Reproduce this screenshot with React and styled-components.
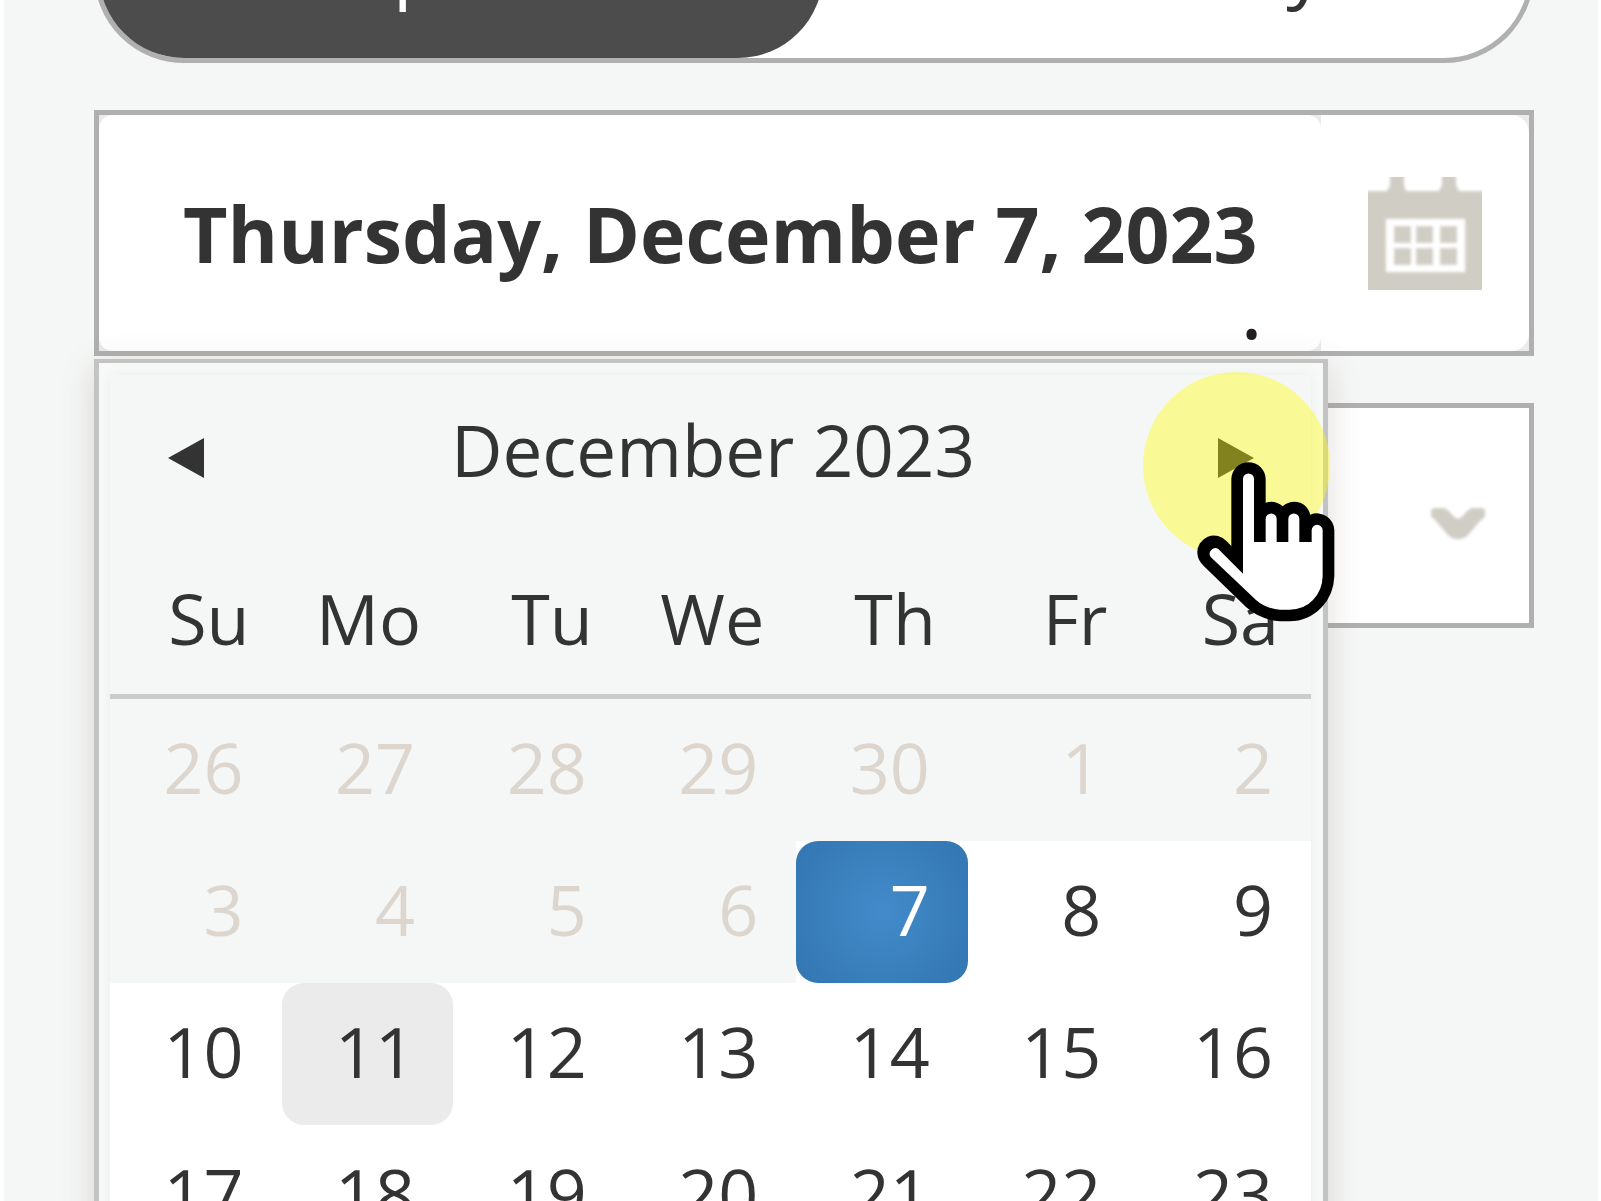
import React from "react";
import styled, { createGlobalStyle, css } from "styled-components";

const Global = createGlobalStyle`
  *, *::before, *::after { box-sizing: border-box; }
  body { margin: 0; background: #f5f7f6; overflow: hidden; }
  button, input, select { font: inherit; color: inherit; margin: 0; padding: 0; border: 0; background: none; }
`;

const Page = styled.main`
  height: 100vh;
  overflow: hidden;
  padding: 0 64px 0 90px;
  border: solid #ffffff;
  border-width: 0 3px 0 4px;
  background: #f5f7f6;
  color: #333333;
  font-family: "Open Sans", "Noto Sans", sans-serif;
  font-size: 70px;
`;

const Form = styled.form`
  display: flex;
  flex-direction: column;
  gap: 47px;
  margin-top: -117px;
`;

const Toggle = styled.div`
  display: flex;
  height: 180px;
  border: 5px solid #b0b0b0;
  border-radius: 90px;
  background: #ffffff;
  font-size: 77px;
`;

const ToggleOption = styled.button`
  flex: ${(p) => (p.$active ? "0 0 724px" : "1")};
  border-radius: 85px;
  padding: ${(p) => (p.$active ? "0 24px 16px 0" : "0 0 16px 8px")};
  line-height: 100px;
  ${(p) =>
    p.$active &&
    css`
      background: #4c4c4c;
      color: #ffffff;
    `}
`;

const DateField = styled.div`
  position: relative;
  display: grid;
  grid-template-columns: minmax(0, 1fr) 208px;
  height: 246px;
  border: 5px solid #b0b0b0;
  background: #ebebeb;
`;

const DateInput = styled.input`
  width: 100%;
  height: 100%;
  padding: 1px 0 0 84px;
  border-radius: 14px;
  background: #ffffff;
  font-size: 77px;
  font-weight: 700;
`;

const CalendarButton = styled.button`
  display: flex;
  align-items: center;
  padding-left: 47px;
  border-radius: 0 18px 18px 0;
  background: #ffffff;
`;

const Dot = styled.span`
  position: absolute;
  right: 266px;
  bottom: 6px;
  font-size: 88px;
  line-height: 80px;
  color: #231f20;
`;

const Popup = styled.section`
  position: absolute;
  z-index: 2;
  top: 249px;
  left: 0;
  right: 206px;
  margin: -5px -5px 0;
  padding: 12px 12px 12px 11px;
  border: 5px solid #c3c3c3;
  border-top-width: 4px;
  background: #f7f8f8;
  box-shadow: 0 8px 32px rgba(110, 90, 70, 0.2);
`;

const Panel = styled.div`
  background: #f5f7f6;
  box-shadow: 0 0 12px rgba(0, 0, 0, 0.05);
`;

const PopupHeader = styled.header`
  display: flex;
  align-items: center;
  justify-content: space-between;
  height: 148px;
  padding: 0 57px 0 58px;
`;

const Title = styled.h2`
  margin: 0;
  padding: 2px 0 0 4px;
  font-size: 71px;
  font-weight: 400;
  line-height: 96px;
`;

const ArrowButton = styled.button`
  display: flex;
  padding-top: 18px;
`;

const Month = styled.table`
  width: 100%;
  table-layout: fixed;
  border-collapse: separate;
  border-spacing: 0;
`;

const WeekdayCell = styled.th`
  height: 176px;
  padding: 48px 32px 28px 0;
  border-bottom: 5px solid #cacbca;
  font-weight: 400;
  line-height: 95px;
  text-align: right;
`;

const DayCell = styled.td`
  padding: 0;
  background: ${(p) => (p.$past ? "#f5f7f6" : "#ffffff")};
`;

const Day = styled.button`
  display: block;
  width: 100%;
  height: 142px;
  padding: 0 38px 6px 0;
  border-radius: 22px;
  text-align: right;
  line-height: 136px;
  &:disabled { color: #dcd6cf; }
  ${(p) =>
    p.$state === "selected" &&
    css`
      background: radial-gradient(circle, #428bca, #3276b1);
      color: #ffffff;
    `}
  ${(p) => p.$state === "hover" && css`background: #ebebeb;`}
`;

const SelectField = styled.div`
  display: grid;
  align-items: center;
  height: 225px;
  border: 5px solid #b0b0b0;
  background: #ffffff;
  & > * { grid-area: 1 / 1; }
  & > svg { justify-self: end; margin: 15px 39px 0 0; pointer-events: none; }
`;

const Select = styled.select`
  width: 100%;
  height: 100%;
  appearance: none;
`;

const Pointer = styled.div`
  position: absolute;
  z-index: 3;
  top: 257px;
  right: 193px;
  width: 193px;
  height: 251px;
  pointer-events: none;
`;

const Halo = styled.div`
  width: 187px;
  height: 187px;
  border-radius: 50%;
  background: rgba(255, 255, 0, 0.39);
`;

const Hand = styled.svg`
  position: absolute;
  left: 54px;
  top: 90px;
`;

const weekdays = ["Su", "Mo", "Tu", "We", "Th", "Fr", "Sa"];
const weeks = [
  [26, 27, 28, 29, 30, 1, 2],
  [3, 4, 5, 6, 7, 8, 9],
  [10, 11, 12, 13, 14, 15, 16],
  [17, 18, 19, 20, 21, 22, 23],
];

const isPast = (week, col) => week === 0 || (week === 1 && col < 4);
const dayState = (week, day) => {
  if (week === 1 && day === 7) return "selected";
  if (day === 11) return "hover";
  return undefined;
};

function CalendarIcon() {
  return (
    <svg width="114" height="113" viewBox="0 0 114 113" aria-hidden="true">
      <defs>
        <filter id="soft-calendar" x="-10%" y="-10%" width="120%" height="120%">
          <feGaussianBlur stdDeviation="1.8" />
        </filter>
      </defs>
      <g filter="url(#soft-calendar)">
        <path fill="#d0cdc5" d="M-8 14H19L22 8V-8H36V8L38 14H71L74 8V-8H88V8L91 14H122V121H-8Z" />
        <rect x="18" y="42" width="79" height="53" fill="#ffffff" />
        <g fill="#d0cdc5">
          {[49, 71].map((y) =>
            [26, 48, 72].map((x) => <rect key={`${x}-${y}`} x={x} y={y} width="17" height="17" />)
          )}
        </g>
      </g>
    </svg>
  );
}

function Arrow({ next }) {
  return (
    <svg width="37" height="42" viewBox="0 0 37 42" aria-hidden="true">
      <path fill="#333333" d={next ? "M1 1V41L37 21Z" : "M36 1V41L0 21Z"} />
    </svg>
  );
}

function Chevron() {
  return (
    <svg width="64" height="41" viewBox="-4 -4 64 41" aria-hidden="true">
      <defs>
        <filter id="soft-chevron">
          <feGaussianBlur stdDeviation="1.5" />
        </filter>
      </defs>
      <path
        filter="url(#soft-chevron)"
        fill="#d0cdc5"
        d="M4 1Q1 2 1 5V9Q2 11 5 13L18 28Q21 32 28 32Q35 32 38 28L51 13Q55 11 55 8V4Q55 1 51 1H42Q37 3 33 9Q28 14 23 9Q19 3 14 1Z"
      />
    </svg>
  );
}

function HandCursor() {
  return (
    <Hand width="138" height="160" viewBox="291 485 414 480" aria-hidden="true">
      <path
        fill="#000000"
        d="M394 537A51.500 51.500 0 0 1 497 537V607Q525 598 548 618Q567 601 592 605Q622 611 631 643A52 52 0 0 1 703 690V828Q701 884 665 921Q625 963 568 963H540Q480 958 438 920L312 798Q293 780 292 758A50 50 0 0 1 380 723L394 737Z"
      />
      <path
        fill="#ffffff"
        d="M429 536A16.500 16.500 0 0 1 462 536V725H497V656A16.500 16.500 0 0 1 530 656V725H565V656A16.500 16.500 0 0 1 598 656V725H635V690A16.500 16.500 0 0 1 668 690V828Q667 870 639 899Q612 928 568 928H540Q497 925 468 899L332 770A17 17 0 0 1 355 746L429 820Z"
      />
    </Hand>
  );
}

export default function App() {
  return (
    <Page>
      <Global />
      <Form>
        <Toggle>
          <ToggleOption type="button" $active>Express</ToggleOption>
          <ToggleOption type="button">Delivery</ToggleOption>
        </Toggle>
        <DateField>
          <DateInput type="text" aria-label="Date" readOnly value="Thursday, December 7, 2023" />
          <CalendarButton type="button" aria-label="Open calendar">
            <CalendarIcon />
          </CalendarButton>
          <Dot>.</Dot>
          <Popup>
            <Panel>
              <PopupHeader>
                <ArrowButton type="button" aria-label="Previous month"><Arrow /></ArrowButton>
                <Title>December 2023</Title>
                <ArrowButton type="button" aria-label="Next month"><Arrow next /></ArrowButton>
              </PopupHeader>
              <Month>
                <thead>
                  <tr>
                    {weekdays.map((d) => <WeekdayCell key={d} scope="col">{d}</WeekdayCell>)}
                  </tr>
                </thead>
                <tbody>
                  {weeks.map((days, w) => (
                    <tr key={w}>
                      {days.map((day, c) => (
                        <DayCell key={day} $past={isPast(w, c)}>
                          <Day type="button" disabled={isPast(w, c)} $state={dayState(w, day)}>{day}</Day>
                        </DayCell>
                      ))}
                    </tr>
                  ))}
                </tbody>
              </Month>
            </Panel>
          </Popup>
          <Pointer>
            <Halo />
            <HandCursor />
          </Pointer>
        </DateField>
        <SelectField>
          <Select aria-label="Time" defaultValue="">
            <option value="" />
          </Select>
          <Chevron />
        </SelectField>
      </Form>
    </Page>
  );
}
